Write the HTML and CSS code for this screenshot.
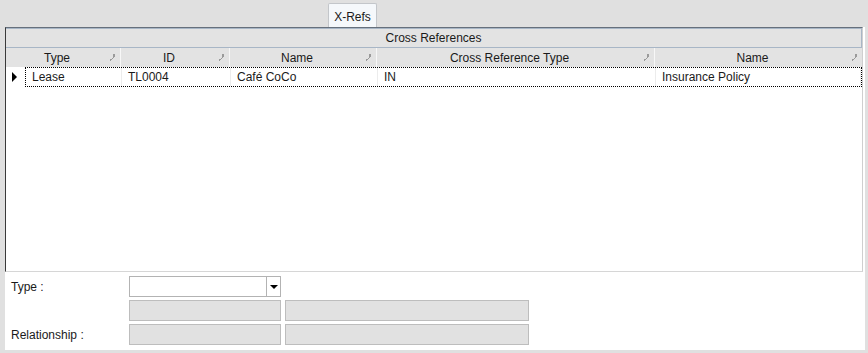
FILE: index.html
```html
<!DOCTYPE html>
<html lang="en">
<head>
    <meta charset="UTF-8">
    <title>X-Refs</title>
    <link rel="stylesheet" href="styles.css">
</head>
<body>
    <div class="tabs">
        <div class="tab">X-Refs</div>
    </div>

    <div class="panel">
        <div class="grid">
            <div class="caption">Cross References</div>

            <div class="row head">
                <div class="hc w0">Type<svg class="pin" width="5" height="7" viewBox="0 0 5 7"><path d="M3 0h2v3h-1v1h-1zM2 4h1v1h-1zM0 5h2v1h-1v1h-1z" fill="#9a9a9a"/></svg></div>
                <div class="hc w2">ID<svg class="pin" width="5" height="7" viewBox="0 0 5 7"><path d="M3 0h2v3h-1v1h-1zM2 4h1v1h-1zM0 5h2v1h-1v1h-1z" fill="#9a9a9a"/></svg></div>
                <div class="hc w3">Name<svg class="pin" width="5" height="7" viewBox="0 0 5 7"><path d="M3 0h2v3h-1v1h-1zM2 4h1v1h-1zM0 5h2v1h-1v1h-1z" fill="#9a9a9a"/></svg></div>
                <div class="hc w4">Cross Reference Type<svg class="pin" width="5" height="7" viewBox="0 0 5 7"><path d="M3 0h2v3h-1v1h-1zM2 4h1v1h-1zM0 5h2v1h-1v1h-1z" fill="#9a9a9a"/></svg></div>
                <div class="hc w5">Name<svg class="pin" width="5" height="7" viewBox="0 0 5 7"><path d="M3 0h2v3h-1v1h-1zM2 4h1v1h-1zM0 5h2v1h-1v1h-1z" fill="#9a9a9a"/></svg></div>
            </div>

            <div class="row data">
                <div class="ind"><span class="arrow"></span></div>
                <div class="cells">
                    <div class="dc w1">Lease</div>
                    <div class="dc w2">TL0004</div>
                    <div class="dc w3">Café CoCo</div>
                    <div class="dc w4">IN</div>
                    <div class="dc w5">Insurance Policy</div>
                </div>
            </div>
        </div>

        <div class="form">
            <label class="lbl">Type :</label>
            <div class="combo"><span class="drop"><span class="caret"></span></span></div>
            <div></div>

            <div></div>
            <div class="box"></div>
            <div class="box"></div>

            <label class="lbl">Relationship :</label>
            <div class="box"></div>
            <div class="box"></div>
        </div>
    </div>
</body>
</html>
```

FILE: styles.css
```css
* {
    box-sizing: border-box;
}
body {
    margin: 0;
    background: #e0e0e0;
    font: 12px "Liberation Sans", Arial, sans-serif;
    color: #1a1a1a;
}
.tabs {
    height: 27px;
    display: flex;
    align-items: flex-end;
    padding-left: 328px;
}
.tab {
    width: 49px;
    height: 24px;
    border: 1px solid #c3c6ca;
    border-bottom: none;
    border-radius: 2px 2px 0 0;
    background: #f5f8fb;
    display: flex;
    align-items: center;
    justify-content: center;
    padding-top: 2px;
}
.panel {
    margin: 0 3px 0 5px;
    height: 323px;
    background: #fff;
}
.grid {
    height: 245px;
    margin-right: 2px;
    border-left: 1px solid #3a3a3a;
    border-top: 1px solid #66707c;
    border-right: 1px solid #cfcfcf;
    border-bottom: 1px solid #d6d6d6;
}
.caption {
    height: 20px;
    background: #e3e3e3;
    border: 1px solid #a8b6c6;
    border-left: none;
    text-align: center;
    line-height: 18px;
}
.row {
    display: flex;
}
.head {
    height: 19px;
    background: #e3e3e3;
}
.hc {
    position: relative;
    height: 19px;
    line-height: 19px;
    padding-top: 1px;
    text-align: center;
    padding-right: 12px;
    border-right: 1px solid #f7f7f7;
}
.pin {
    position: absolute;
    right: 5px;
    top: 6px;
}
.w0 { width: 115px; }
.w1 { width: 96px; }
.w2 { width: 109px; }
.w3 { width: 147px; }
.w4 { width: 278px; }
.w5 { flex: 1; border-right: none; }

.data {
    height: 20px;
}
.ind {
    width: 19px;
    display: flex;
    align-items: center;
    padding-left: 6px;
}
.arrow {
    width: 0;
    height: 0;
    border-top: 5px solid transparent;
    border-bottom: 5px solid transparent;
    border-left: 5px solid #000;
}
.cells {
    flex: 1;
    display: flex;
    border: 1px dotted #000;
}
.dc {
    line-height: 18px;
    padding-left: 6px;
    border-right: 1px solid #ececec;
}

.form {
    display: grid;
    grid-template-columns: 120px 152px 244px;
    grid-auto-rows: 21px;
    column-gap: 4px;
    row-gap: 3px;
    padding-top: 4px;
}
.lbl {
    padding-left: 6px;
    align-self: center;
}
.combo {
    border: 1px solid #b3b3b3;
    background: #fff;
    display: flex;
    justify-content: flex-end;
}
.drop {
    width: 14px;
    border-left: 1px solid #b3b3b3;
    display: flex;
    align-items: center;
    justify-content: center;
}
.caret {
    width: 0;
    height: 0;
    border-left: 4px solid transparent;
    border-right: 4px solid transparent;
    border-top: 4px solid #000;
}
.box {
    background: #e1e1e1;
    border: 1px solid #bdbdbd;
}
```
